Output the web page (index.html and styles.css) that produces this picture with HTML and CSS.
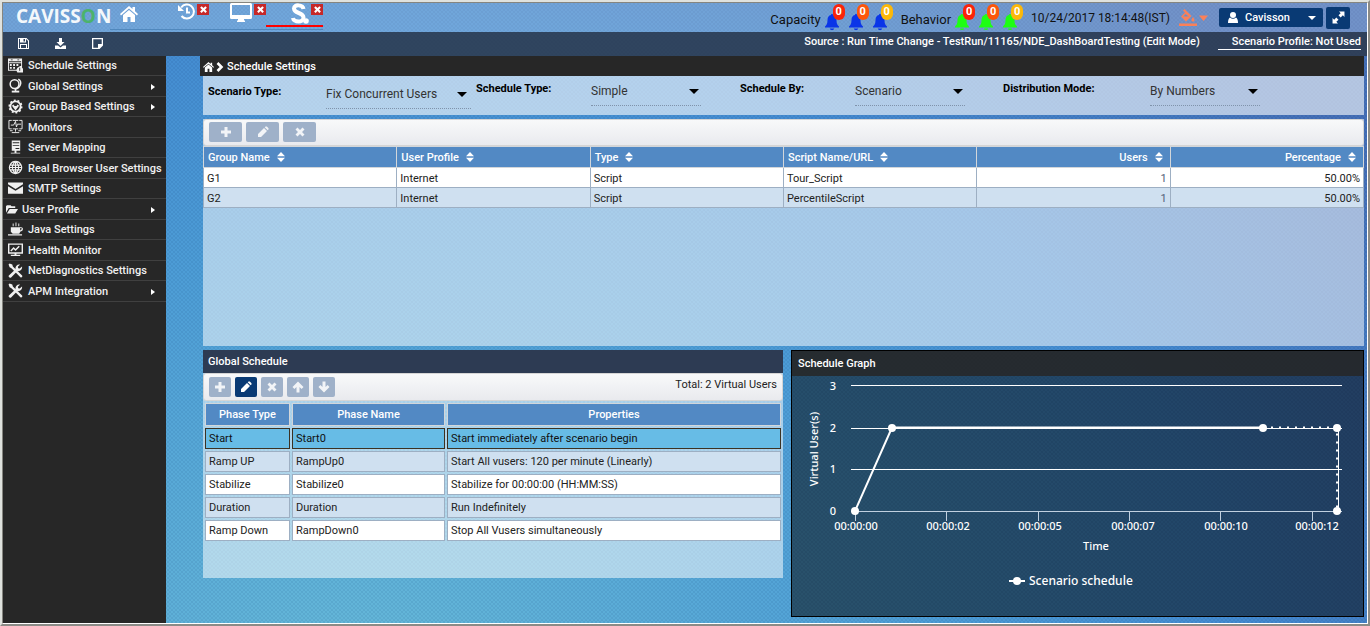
FILE: index.html
```html
<!DOCTYPE html>
<html lang="en">
<head>
<meta charset="utf-8">
<title>Schedule Settings</title>
<link rel="stylesheet" href="styles.css">
</head>
<body>
<svg class="sprite" aria-hidden="true">
  <symbol id="home" viewBox="0 0 18 16"><path d="M9 0 0 8l1 1.4L9 2.600l8 6.800L18 8l-3-2.700V1h-2.500v2.100z"/><path d="M9 4 3 9v7h4.500v-5h3v5H15V9z"/></symbol>
  <symbol id="plus" viewBox="0 0 12 12"><path d="M4.500 1h3v3.500H11v3H7.500V11h-3V7.500H1v-3h3.500z"/></symbol>
  <symbol id="pencil" viewBox="0 0 12 12"><path d="M1 8 7 2l3 3-6 6H1zM7.700 1.300 8.600.5h1.200l1.700 1.700v1.200l-.8.900z"/></symbol>
  <symbol id="cross" viewBox="0 0 12 12"><path d="m1.500 3.500 2-2L6 4l2.500-2.500 2 2L8 6l2.500 2.500-2 2L6 8l-2.500 2.500-2-2L4 6z"/></symbol>
  <symbol id="up" viewBox="0 0 12 12"><path d="m6 .5 5.500 5.500-1.900 1.900L7.500 5.900v5.600h-3V5.900l-2.100 2L.5 6z"/></symbol>
  <symbol id="down" viewBox="0 0 12 12"><path d="M6 11.500.5 6l1.900-1.900 2.100 2V.5h3v5.600l2.100-2L11.500 6z"/></symbol>
  <symbol id="sort" viewBox="0 0 8 10"><path d="M4 0 8 4.300H0zM4 10 0 5.700h8z"/></symbol>
  <symbol id="bell" viewBox="0 0 14 16"><path d="M7 0c.7 0 1 .4 1 1 2.400.5 3.500 2.300 3.500 5 0 3.500.7 5 2.500 6.500V13.500H0v-1C1.800 11 2.500 9.500 2.500 6c0-2.700 1.100-4.500 3.500-5 0-.6.300-1 1-1zM5 14.500h4c0 1-.8 1.500-2 1.500s-2-.5-2-1.500z"/></symbol>
  <symbol id="tools" viewBox="0 0 14 14"><path d="M1.500.5 4 1.500l.5 1.800 8.700 8.400c.7 1-.5 2.300-1.600 1.600L3.200 4.800 1.500 4 .5 1.500z"/><path d="M.8 11.700 7 5.800c-.5-2.600 1.700-5 4.300-4.300L9.200 3.600l.3 1.200 1.400.4 2.200-2c.6 2.800-1.800 4.900-4.300 4.300l-5.900 6c-1.300.8-2.900-.6-2.100-1.800z"/></symbol>
</svg>
<div class="window">
  <header class="topbar">
    <div class="logo">CAVISS<span class="logo-o">O</span>N</div>
    <nav class="tabs" aria-label="Open views">
      <a class="home" href="#" aria-label="Home"><svg width="18" height="16"><use href="#home"/></svg></a>
      <div class="tab">
        <a href="#" aria-label="History"><svg width="17" height="17" viewBox="0 0 17 17"><path class="line2" d="M3.200 4.500A7 7 0 1 1 3.500 13"/><path d="M0 2v6h6z"/><path class="line2" d="M9 4.500V9.500H12"/></svg></a>
        <button class="close" aria-label="Close"><svg width="9" height="9"><use href="#cross"/></svg></button>
      </div>
      <div class="tab">
        <a href="#" aria-label="Dashboard"><svg width="22" height="19" viewBox="0 0 22 19"><path fill-rule="evenodd" d="M1.500 0h19Q22 0 22 1.500v13q0 1.500-1.500 1.500H14v1.500h1V19H7v-1.500h1V16H1.500Q0 16 0 14.500v-13Q0 0 1.500 0zM2 2v10h18V2z"/></svg></a>
        <button class="close" aria-label="Close"><svg width="9" height="9"><use href="#cross"/></svg></button>
      </div>
      <div class="tab tab-active">
        <a href="#" aria-label="Scenario"><svg width="18" height="21" viewBox="0 0 18 21"><path class="line4" d="M12.500 6C12 1.500 3 1 3 5.500c0 5.500 9.500 3.500 9.500 9 0 5.500-10 5-10.500.500"/><circle cx="15" cy="18" r="2.800"/></svg></a>
        <button class="close" aria-label="Close"><svg width="9" height="9"><use href="#cross"/></svg></button>
      </div>
    </nav>
    <div class="status">
      <div class="alerts"><span>Capacity</span>
        <span class="bell blue"><svg width="14" height="16"><use href="#bell"/></svg><b class="red">0</b></span>
        <span class="bell blue"><svg width="14" height="16"><use href="#bell"/></svg><b class="orange">0</b></span>
        <span class="bell blue"><svg width="14" height="16"><use href="#bell"/></svg><b class="amber">0</b></span>
      </div>
      <div class="alerts"><span>Behavior</span>
        <span class="bell green"><svg width="14" height="16"><use href="#bell"/></svg><b class="red">0</b></span>
        <span class="bell green"><svg width="14" height="16"><use href="#bell"/></svg><b class="orange">0</b></span>
        <span class="bell green"><svg width="14" height="16"><use href="#bell"/></svg><b class="amber">0</b></span>
      </div>
      <time class="clock">10/24/2017 18:14:48(IST)</time>
      <button class="theme" aria-label="Theme colour"><svg width="29" height="17" viewBox="0 0 29 17"><path fill-rule="evenodd" d="M4 1.500 5.500 0l7 7-5.500 5.500L2 7.500l4-4zM6.500 5 4 7.500h6zM14 8c2 2.500 2 4.500 0 4.500s-2-2 0-4.500zM0 14.500h18V17H0zM20 6.500h9L24.500 12z"/></svg></button>
      <button class="user"><svg width="10" height="11" viewBox="0 0 10 11"><circle cx="5" cy="3" r="3"/><path d="M2 5.500Q5 8 8 5.500 10 6.500 10 11H0Q0 6.500 2 5.500z"/></svg><span>Cavisson</span><i class="caret"></i></button>
      <button class="expand" aria-label="Full screen"><svg width="13" height="13" viewBox="0 0 12 12"><path d="M6.500.5h5v5L10 4 8 6 6 4l2-2zM5.500 11.500h-5v-5L2 8l2-2 2 2-2 2z"/></svg></button>
    </div>
  </header>

  <div class="toolbar">
    <div class="tool-buttons">
      <button aria-label="Save"><svg width="11" height="11" viewBox="0 0 11 11"><path fill-rule="evenodd" d="M0 0h8.500L11 2.500V11H0zM1 1v9h1V6h7v4h1V3L8 1v3.500H2V1zM5.500 1v2.500H7V1zM3 7v3h5V7z"/></svg></button>
      <button aria-label="Download"><svg width="11" height="11" viewBox="0 0 11 11"><path d="M4 0h3v4h2.500l-4 4-4-4H4zM0 7.500h3l2.500 2L8 7.500h3V11H0z"/></svg></button>
      <button aria-label="Notes"><svg width="11" height="11" viewBox="0 0 11 11"><path fill-rule="evenodd" d="M0 0h11v7.500L7.500 11H0zM1.300 1.300v8.400H6V6h3.700V1.300z"/></svg></button>
    </div>
    <span class="source">Source : Run Time Change - TestRun/11165/NDE_DashBoardTesting (Edit Mode)</span>
    <a class="profile" href="#">Scenario Profile: Not Used</a>
  </div>

  <div class="body">
    <nav class="sidebar" aria-label="Settings">
      <ul>
        <li><a href="#"><svg viewBox="0 0 16 15"><path fill-rule="evenodd" d="M0 0h15v10l1 1v4H10l-1-2H0zM1 3v1h13V3zM1 5v7h8l1-2 3-2h1V5zM2 6h2v2H2zM5.500 6h2v2h-2zM9 6h2v2H9zM2 9h2v2H2zM5.500 9h2v2h-2zM12 10h1v3h-1zM3 1v1h2V1zM10 1v1h2V1z"/></svg>Schedule Settings</a></li>
        <li class="more"><a href="#"><svg viewBox="0 0 16 15"><circle class="line" cx="7" cy="6" r="4.700"/><path class="line" d="M11 .8c5 3 2 10-4 10.700M8 11v3"/><path d="M4 13h8v2H4z"/></svg>Global Settings</a></li>
        <li class="more"><a href="#"><svg viewBox="0 0 16 15"><circle class="line2" cx="8" cy="7.500" r="5.500"/><circle class="cog" cx="8" cy="7.500" r="6.500"/><path class="line2" d="m5 6 3 4 3-4M8 7v3"/></svg>Group Based Settings</a></li>
        <li><a href="#"><svg viewBox="0 0 16 15"><path class="line1" d="M4 1H1v9h3M12 1h3v9h-3M3 6h3l2-4 1 6 1-3h4M5 1h6M5 10h6M8 10v3M4 14h8M2 12h3M11 12h3"/></svg>Monitors</a></li>
        <li><a href="#"><svg viewBox="0 0 16 15"><path fill-rule="evenodd" d="M4 0h9v11H4zM5 2v1h7V2zM5 5v1h7V5zM8 8v1h4V8zM7 11h2v2h4v1H3v-1h4z"/></svg>Server Mapping</a></li>
        <li><a href="#"><svg viewBox="0 0 16 15"><path class="line-globe" d="M8 1a6.500 6.500 0 1 0 .1 0M8 1v13M8 1Q1 7 8 14M8 1q7 6 0 13M2 5h12M1 7.500h14M2 10h12"/></svg>Real Browser User Settings</a></li>
        <li><a href="#"><svg viewBox="0 0 16 15"><path d="M0 1h16v2L8 8 0 3zM0 5l8 5 8-5v8H0z"/></svg>SMTP Settings</a></li>
        <li class="more tight"><a href="#"><svg viewBox="0 0 13 10"><path d="M1 1h4l1 1h4v2H3L0 9V2zM4 5h9l-3 5H1z"/></svg>User Profile</a></li>
        <li><a href="#"><svg viewBox="0 0 16 15"><path fill-rule="evenodd" d="M3 5h11q2 0 2 2t-3 3l-1 2H5L3 10zM13 6v2.500Q15 8 14.500 6zM0 12.500h15V14H0zM5 1h1v3H5zM8 0h1v4H8zM11 1h1v3h-1z"/></svg>Java Settings</a></li>
        <li><a href="#"><svg viewBox="0 0 16 15"><path fill-rule="evenodd" d="M0 1h16v11H9v1h4v1.500H3V13h4v-1H0zM1.500 2.500v8h13v-8z"/><path class="line" d="m3 9 3-3 2 2 4-4"/></svg>Health Monitor</a></li>
        <li><a href="#"><svg viewBox="0 0 14 14"><use href="#tools"/></svg>NetDiagnostics Settings</a></li>
        <li class="more"><a href="#"><svg viewBox="0 0 14 14"><use href="#tools"/></svg>APM Integration</a></li>
      </ul>
    </nav>

    <main class="content">
      <div class="breadcrumb"><a href="#" aria-label="Home"><svg width="11" height="10"><use href="#home"/></svg></a><svg width="8" height="10" viewBox="0 0 8 10"><path class="chevron" d="m1.500 1 4 4-4 4"/></svg><span>Schedule Settings</span></div>

      <form class="filters">
        <div class="field field-lead"><label for="scenario">Scenario Type:</label><span class="pick"><select id="scenario"><option>Fix Concurrent Users</option></select></span></div>
        <div class="field"><label for="schedule">Schedule Type:</label><span class="pick"><select id="schedule"><option>Simple</option></select></span></div>
        <div class="field"><label for="by">Schedule By:</label><span class="pick"><select id="by"><option>Scenario</option></select></span></div>
        <div class="field field-wide"><label for="mode">Distribution Mode:</label><span class="pick"><select id="mode"><option>By Numbers</option></select></span></div>
      </form>

      <section class="groups">
        <div class="actions">
          <button class="act wide" disabled aria-label="Add group"><svg><use href="#plus"/></svg></button>
          <button class="act wide" disabled aria-label="Edit group"><svg><use href="#pencil"/></svg></button>
          <button class="act wide" disabled aria-label="Delete group"><svg><use href="#cross"/></svg></button>
        </div>
        <table class="group-table">
          <thead><tr>
            <th>Group Name<svg><use href="#sort"/></svg></th><th>User Profile<svg><use href="#sort"/></svg></th><th>Type<svg><use href="#sort"/></svg></th><th>Script Name/URL<svg><use href="#sort"/></svg></th><th class="num">Users<svg><use href="#sort"/></svg></th><th class="num">Percentage<svg><use href="#sort"/></svg></th>
          </tr></thead>
          <tbody>
            <tr><td>G1</td><td>Internet</td><td>Script</td><td>Tour_Script</td><td class="num count">1</td><td class="num">50.00%</td></tr>
            <tr><td>G2</td><td>Internet</td><td>Script</td><td>PercentileScript</td><td class="num count">1</td><td class="num">50.00%</td></tr>
          </tbody>
        </table>
      </section>

      <div class="lower">
        <section class="phases">
          <h2>Global Schedule</h2>
          <div class="actions">
            <button class="act" disabled aria-label="Add phase"><svg><use href="#plus"/></svg></button>
            <button class="act on" aria-label="Edit phase"><svg><use href="#pencil"/></svg></button>
            <button class="act" disabled aria-label="Delete phase"><svg><use href="#cross"/></svg></button>
            <button class="act" disabled aria-label="Move up"><svg><use href="#up"/></svg></button>
            <button class="act" disabled aria-label="Move down"><svg><use href="#down"/></svg></button>
            <span class="total">Total: 2 Virtual Users</span>
          </div>
          <table class="phase-table">
            <colgroup><col class="c-type"><col class="c-name"><col></colgroup>
            <thead><tr><th>Phase Type</th><th>Phase Name</th><th>Properties</th></tr></thead>
            <tbody>
              <tr class="selected"><td>Start</td><td>Start0</td><td>Start immediately after scenario begin</td></tr>
              <tr><td>Ramp UP</td><td>RampUp0</td><td>Start All vusers: 120 per minute (Linearly)</td></tr>
              <tr><td>Stabilize</td><td>Stabilize0</td><td>Stabilize for 00:00:00 (HH:MM:SS)</td></tr>
              <tr><td>Duration</td><td>Duration</td><td>Run Indefinitely</td></tr>
              <tr><td>Ramp Down</td><td>RampDown0</td><td>Stop All Vusers simultaneously</td></tr>
            </tbody>
          </table>
        </section>

        <section class="graph">
          <h2>Schedule Graph</h2>
          <svg class="chart" viewBox="0 0 571 240" role="img" aria-label="Scenario schedule">
            <path class="grid" d="M59 9.500h491M59 52.500h491M59 93.500h491"/>
            <path class="axis" d="M59 135.500h491M63.500 135v10M154.500 135v10M246.500 135v10M337.500 135v10M428.500 135v10M520.500 135v10"/>
            <path class="series" d="M63 135 100 51.500H471"/>
            <path class="series dotted" d="M471 51.500h74V135"/>
            <path class="grid" d="M546.500 52v83"/>
            <g class="dots"><circle cx="63" cy="135" r="4"/><circle cx="100" cy="52" r="4"/><circle cx="471" cy="52" r="4"/><circle cx="545" cy="52" r="4"/><circle cx="545" cy="135" r="4"/></g>
            <g class="ylabels"><text x="44" y="14">3</text><text x="44" y="56">2</text><text x="44" y="97">1</text><text x="44" y="139">0</text></g>
            <g class="xlabels"><text x="64" y="154">00:00:00</text><text x="156" y="154">00:00:02</text><text x="248" y="154">00:00:05</text><text x="341" y="154">00:00:07</text><text x="434" y="154">00:00:10</text><text x="525" y="154">00:00:12</text><text x="304" y="174">Time</text><text transform="translate(26 73) rotate(-90)">Virtual User(s)</text></g>
            <path class="series" d="M217 205h16"/><circle class="dots" cx="225" cy="205" r="4"/>
            <text class="legend" x="237" y="209">Scenario schedule</text>
          </svg>
        </section>
      </div>
    </main>
  </div>
</div>
</body>
</html>
```
FILE: styles.css
```css
* { box-sizing: border-box; }

body {
  margin: 0;
  min-height: 100vh;
  display: flex;
  border: 2px solid;
  border-color: #dfe2de #8b8b87 #8b8b87 #dfe2de;
  font: 11px/16px Roboto, "Liberation Sans", sans-serif;
  color: #222;
}

.sprite { position: absolute; width: 0; height: 0; }
svg { fill: currentColor; flex: none; display: block; }
a { color: inherit; text-decoration: none; }
button { border: 0; padding: 0; font: inherit; color: inherit; background: none; }
h2 { margin: 0; font-size: 11px; font-weight: 500; color: #fff; }
.line, .line1, .line2, .line4, .line-globe, .chevron { fill: none; stroke: currentColor; stroke-width: 1.6; }
.line1 { stroke-width: 1; }
.line2 { stroke-width: 2; }
.line4 { stroke-width: 4; }
.line-globe { stroke-width: 1.2; }
.chevron { stroke-width: 2.6; }
.cog { fill: none; stroke: currentColor; stroke-width: 2; stroke-dasharray: 2 2; }

.window {
  flex: 1;
  min-width: 0;
  display: flex;
  flex-direction: column;
  border: 1px solid;
  border-color: #85857f #fff #fff #85857f;
  background:
    conic-gradient(rgba(0, 30, 90, .08) 25%, transparent 0 50%, rgba(0, 30, 90, .08) 0 75%, transparent 0) 0 0 / 4px 4px,
    radial-gradient(ellipse 90% 150% at 26% 112%, #68bbd9 0%, #4d9dd6 48%, #448cd1 72%, #4570b7 100%);
}

.topbar {
  display: flex;
  height: 29px;
  padding: 0 17px 0 13px;
  background: rgba(255, 255, 255, .24);
}
.logo { font: bold 19px/26px "Open Sans", "Noto Sans", sans-serif; color: #f4f8fb; width: 94px; }
.logo-o { color: #4bb36c; }

.tabs { display: flex; height: 27px; color: #fff; border-bottom: 1px solid #5088bd; }
.home { width: 42px; padding: 3px 0 0 10px; }
.tab {
  width: 57px;
  height: 24px;
  display: flex;
  justify-content: flex-end;
  align-items: flex-start;
  gap: 2px;
}
.tab-active { border-bottom: 2px solid #f00; }
.close {
  width: 12px;
  height: 11px;
  margin-top: 1px;
  display: grid;
  place-items: center;
  background: #c62828;
  color: #fff;
}

.status { margin-left: auto; display: flex; align-items: center; }
.alerts {
  display: flex;
  align-self: flex-end;
  gap: 10px;
  margin-right: 14px;
  font-size: 13px;
  color: #111;
}
.alerts > span:first-child { margin: 0 -6px 0 0; line-height: 24px; }
.alerts + .alerts { margin: 0 14px 0 0; }
.bell { position: relative; padding-top: 6px; }
.bell b {
  position: absolute;
  left: 8px;
  top: -4px;
  width: 12px;
  border-radius: 6px;
  font-size: 11px;
  text-align: center;
  color: #fff;
}
.blue { color: #0a35e8; }
.green { color: #1eff12; }
.red { background: #fb2408; }
.orange { background: #fd560a; }
.amber { background: #fcb80a; }
.clock { font-size: 12px; color: #111; margin-right: 9px; }
.theme { color: #fb8058; margin-right: 11px; }
.user {
  display: flex;
  align-items: center;
  gap: 7px;
  width: 104px;
  height: 19px;
  padding: 0 7px 0 9px;
  border-radius: 2px;
  background: #093a74;
  color: #fff;
  font-weight: 500;
}
.caret { margin-left: auto; border: 4px solid transparent; border-top-color: currentColor; border-bottom: 0; }
.expand {
  width: 24px;
  height: 22px;
  margin-left: 3px;
  display: grid;
  place-items: center;
  border-radius: 2px;
  background: #093a74;
  color: #fff;
}

.toolbar {
  height: 24px;
  padding: 0 6px 2px 15px;
  display: flex;
  align-items: center;
  background: rgba(45, 56, 75, .85);
  color: #fff;
  font-weight: 500;
}
.tool-buttons { display: flex; gap: 26px; margin-right: auto; }
.source { margin: 0 18px 2px 0; }
.profile { padding-left: 14px; margin-bottom: 1px; border-bottom: 1px solid #fff; line-height: 14px; }

.body { flex: 1; display: flex; }
.sidebar { width: 163px; background: #272727; color: #f0f0f0; font-weight: 500; }
.sidebar ul { margin: 0; padding: 0; list-style: none; }
.sidebar li { height: 21px; border-bottom: 1px solid #404040; }
.sidebar li:nth-child(odd) { height: 20px; }
.sidebar a { display: flex; align-items: center; gap: 5px; height: 100%; padding: 1px 0 0 5px; white-space: nowrap; }
.sidebar svg { width: 15px; height: 15px; margin-bottom: 2px; }
.sidebar .tight a { gap: 4px; padding-left: 3px; }
.sidebar .tight svg { width: 12px; height: 10px; }
.more a::after {
  content: "";
  margin: 0 11px 0 auto;
  border: 3px solid transparent;
  border-left: 4px solid #fff;
  border-right: 0;
}

.content { flex: 1; min-width: 0; padding: 0 3px 6px 37px; }
.breadcrumb {
  display: flex;
  align-items: center;
  gap: 2px;
  height: 20px;
  margin-left: -3px;
  padding: 1px 0 0 3px;
  background: #272727;
  color: #fff;
  font-weight: 500;
}
.breadcrumb span { padding-left: 1px; }

.filters {
  display: grid;
  grid-template-columns: 268fr 264fr 263fr 361fr;
  height: 39px;
  padding: 5px 0 0 5px;
  margin-bottom: 4px;
  background: rgba(255, 255, 255, .6);
}
.field { display: flex; align-items: flex-start; }
.field label { width: 115px; color: #000; font-weight: 700; }
.field-lead { padding-top: 3px; }
.field-lead label { width: 118px; }
.field-wide label { width: 147px; }
.pick { position: relative; width: 110px; border-bottom: 1px dotted #8093ab; }
.field-lead .pick { width: 145px; }
.pick select {
  appearance: none;
  display: block;
  width: 100%;
  height: 24px;
  padding: 0 0 4px;
  border: 0;
  background: none;
  color: #333;
  font: 12px/20px Roboto, "Liberation Sans", sans-serif;
}
.pick::after {
  content: "";
  position: absolute;
  right: 2px;
  top: 8px;
  border: 5px solid transparent;
  border-top-color: #000;
  border-bottom: 0;
  pointer-events: none;
}
.field-lead .pick::after { right: 4px; }

.groups { min-height: 227px; background: rgba(255, 255, 255, .52); }
.actions {
  display: flex;
  align-items: center;
  gap: 4px;
  height: 27px;
  padding: 0 5px 1px;
  border: 1px solid #d5d5d5;
  border-radius: 3px;
  background: linear-gradient(#f8f9fa, #e9eaee);
}
.act {
  display: grid;
  place-items: center;
  width: 22px;
  height: 20px;
  border-radius: 2px;
  background: #9fb1c9;
  color: #f2f4f7;
}
.act svg { width: 12px; height: 12px; }
.wide { width: 33px; }
.on { background: #093a74; color: #fff; }
.total { margin: 0 0 4px auto; }

table { width: 100%; table-layout: fixed; }
th, td { text-align: left; white-space: nowrap; overflow: hidden; }
th { background: #5289c4; color: #fff; font-weight: 500; }
td { background: #fff; }
tbody tr:nth-child(even) td { background: #cfe0f0; }

.group-table { border-collapse: collapse; }
.group-table th { height: 21px; padding: 2px 4px 0; border: 1px solid #d2d6da; }
.group-table td { height: 20px; padding: 2px 3px 0; border: 1px solid #9dafc3; }
.group-table th svg { display: inline-block; width: 8px; height: 10px; margin: 0 3px 0 7px; vertical-align: -1px; }
.group-table .num { text-align: right; }
.count { color: #53617a; }

.lower { display: grid; grid-template-columns: 580fr 573fr; gap: 8px; align-items: start; margin-top: 4px; }
.phases { min-height: 228px; background: rgba(255, 255, 255, .52); }
.phases h2 { padding: 4px 5px 3px; background: #2d3b53; }
.phases .actions { height: 28px; }
.phase-table { border-spacing: 2px; }
.phase-table th { height: 23px; padding: 0; border: 1px solid #d2d6da; text-align: center; }
.phase-table td { height: 21px; padding: 0 3px; border: 1px solid #9dafc3; }
.phase-table .selected td { background: #67bce6; border-color: #3b3223; color: #111; }
.c-type { width: 85px; }
.c-name { width: 153px; }

.graph { border: 1px solid #000; background: rgba(0, 0, 0, .5); }
.graph h2 { padding: 5px 6px 4px; background: rgba(39, 39, 39, .86); }
.chart { width: 100%; height: auto; fill: #fff; font: 500 11px "Noto Sans", "Open Sans", sans-serif; }
.grid { stroke: #fff; fill: none; }
.axis { stroke: #c0d0e0; fill: none; }
.series { stroke: #fff; stroke-width: 2; fill: none; }
.dotted { stroke-dasharray: 2 6; }
.xlabels { text-anchor: middle; }
.ylabels { text-anchor: end; }
.legend { font-size: 12px; }
```
